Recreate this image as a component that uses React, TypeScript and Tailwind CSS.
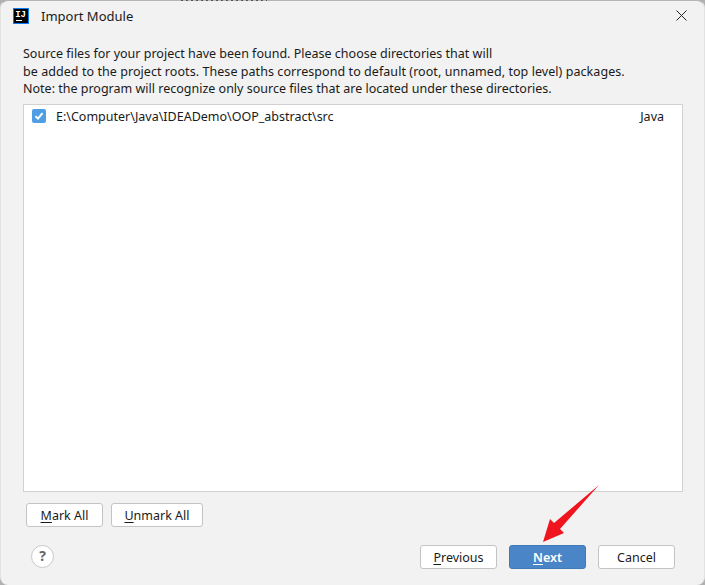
import React from 'react';

function DialogButton({ label, mnemonic, rest, width, primary }: { label?: string; mnemonic?: string; rest?: string; width: string; primary?: boolean }) {
  return (
    <button
      className={`${width} h-[24px] pt-[3px] rounded-[3px] border text-[12.5px] leading-none flex items-center justify-center ${
        primary ? 'bg-[#4a86c7] border-[#3f79b8] text-white font-semibold' : 'bg-white border-[#c4c4c4] text-[#1a1a1a]'
      }`}
    >
      {mnemonic && <span className="underline underline-offset-2">{mnemonic}</span>}
      {rest}
      {label}
    </button>
  );
}

export default function App() {
  return (
    <div className="relative w-[705px] h-[585px] overflow-hidden bg-[#b0b0b0] font-['Noto_Sans',sans-serif]">
      <div className="w-full h-full bg-[#f2f2f2] rounded-[8px] border-t border-l border-r border-t-[#b5b5b5] border-l-[#e2e2e2] border-r-[#e2e2e2] flex flex-col text-[#1a1a1a]">
        <div className="h-[31px] shrink-0 flex items-center pl-[12px] pr-[17px]">
          <svg width="16" height="16" viewBox="0 0 16 16" className="shrink-0 mb-[2px]">
            <rect width="16" height="16" fill="#087cfa" />
            <rect x="1" y="1" width="14" height="14" fill="#000" />
            <text x="2.2" y="8.6" fontSize="9" fontWeight="700" fill="#fff" fontFamily="Liberation Mono, monospace">IJ</text>
            <rect x="3" y="12" width="6" height="1" fill="#fff" />
          </svg>
          <span className="ml-[12px] text-[13px]">Import Module</span>
          <svg width="11" height="11" viewBox="0 0 11 11" className="ml-auto mb-[2px]" stroke="#222" strokeWidth="1" fill="none">
            <path d="M0.5 0.5 L10.5 10.5 M10.5 0.5 L0.5 10.5" />
          </svg>
        </div>
        <div className="flex-1 flex flex-col pl-[22px] pr-[21px] pt-[13px]">
          <p className="text-[12.5px] leading-[17.5px]">
            Source files for your project have been found. Please choose directories that will
            <br />
            <span className="tracking-[0.06px]">be added to the project roots. These paths correspond to default (root, unnamed, top level) packages.</span>
            <br />
            Note: the program will recognize only source files that are located under these directories.
          </p>
          <div className="mt-[6px] h-[388px] bg-white border border-[#d1d1d1] flex items-start">
            <div className="w-full h-[24px] flex items-center pl-[8px] pr-[18px] text-[12.5px]">
              <span className="w-[14px] h-[14px] mb-[2px] rounded-[2px] bg-[#4f9ee3] flex items-center justify-center shrink-0">
                <svg width="10" height="10" viewBox="0 0 10 10" fill="none" stroke="#fff" strokeWidth="2">
                  <path d="M1.5 5.2 L4 7.6 L8.5 2.2" />
                </svg>
              </span>
              <span className="ml-[10px] pt-[2px]">E:\Computer\Java\IDEADemo\OOP_abstract\src</span>
              <span className="ml-auto pt-[2px]">Java</span>
            </div>
          </div>
          <div className="mt-[11px] pl-[3px] flex gap-[8px]">
            <DialogButton mnemonic="M" rest="ark All" width="w-[77px]" />
            <DialogButton mnemonic="U" rest="nmark All" width="w-[92px]" />
          </div>
          <div className="mt-[18px] pl-[8px] pr-[8px] flex items-start">
            <span className="w-[23px] h-[23px] pb-[1px] rounded-full bg-white border border-[#c8c8c8] flex items-center justify-center text-[14px] font-bold text-[#666]">?</span>
            <div className="ml-auto flex gap-[12px]">
              <DialogButton mnemonic="P" rest="revious" width="w-[77px]" />
              <DialogButton mnemonic="N" rest="ext" width="w-[77px]" primary />
              <DialogButton label="Cancel" width="w-[77px]" />
            </div>
          </div>
        </div>
      </div>
      {/* sliver of the window behind the dialog */}
      <div className="absolute left-[181px] top-0 w-[86px] h-[1px] bg-[repeating-linear-gradient(90deg,#555_0_2px,#bbb_2px_5px)]" />
      <svg className="absolute left-[535px] top-[480px]" width="70" height="66" viewBox="535 480 70 66">
        <polygon points="599,485 560,529 564,533 543,542 550,519 554,523" fill="#f0141e" />
      </svg>
    </div>
  );
}
